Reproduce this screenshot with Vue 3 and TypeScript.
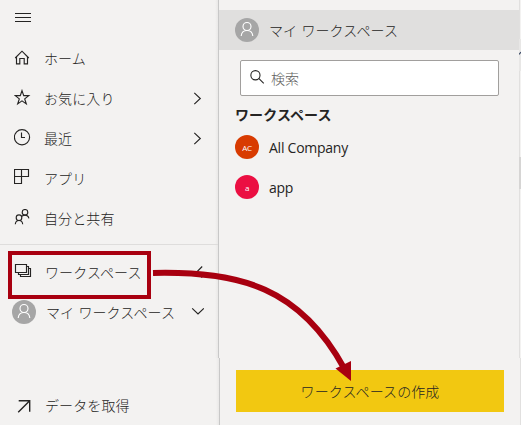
<script setup lang="ts">
interface NavItem {
  icon: string
  label: string
  arrow?: boolean
}

interface Workspace {
  initials: string
  name: string
  tone: string
}

const navItems: NavItem[] = [
  { icon: 'home', label: 'ホーム' },
  { icon: 'star', label: 'お気に入り', arrow: true },
  { icon: 'clock', label: '最近', arrow: true },
  { icon: 'apps', label: 'アプリ' },
  { icon: 'people', label: '自分と共有' },
]

const workspaces: Workspace[] = [
  { initials: 'AC', name: 'All Company', tone: 'orange' },
  { initials: 'a', name: 'app', tone: 'pink' },
]
</script>

<template>
  <div class="screen">
    <nav class="sidebar">
      <div class="menu">
        <svg class="icon" viewBox="0 0 18 18"><path d="M1 4.5h16M1 8.5h16M1 12.5h16" /></svg>
      </div>
      <div v-for="item in navItems" :key="item.icon" class="row">
        <svg v-if="item.icon === 'home'" class="icon" viewBox="0 0 18 18">
          <path d="M1.2 9 8 2.2 14.8 9M2.5 7.8v7h3.3V9.5h4.4v5.3h3.3v-7" />
        </svg>
        <svg v-else-if="item.icon === 'star'" class="icon" viewBox="0 0 18 18">
          <path d="M8 1.6 9.7 6.6h5.1l-4.1 3.3 1.6 5L8 11.9l-4.3 3 1.6-5L1.2 6.6h5.1z" />
        </svg>
        <svg v-else-if="item.icon === 'clock'" class="icon" viewBox="0 0 18 18">
          <circle cx="8" cy="8.2" r="7.6" /><path d="M7.5 3.5v5H11" />
        </svg>
        <svg v-else-if="item.icon === 'apps'" class="icon" viewBox="0 0 18 18">
          <path d="M.5.5h14v7H.5zM.5.5v14h7V.5" />
        </svg>
        <svg v-else class="icon" viewBox="0 0 18 18">
          <circle cx="5" cy="8.7" r="2.8" /><circle cx="11" cy="3.3" r="2.8" />
          <path d="M1.3 15.2c.2-2.4 1.7-3.7 3.7-3.7s3.5 1.3 3.7 3.7M8 7.2c.8-.7 1.8-1.1 3-1.1 2 0 3.4 1.1 3.9 3.2" />
        </svg>
        <span class="label">{{ item.label }}</span>
        <svg v-if="item.arrow" class="chevron" viewBox="0 0 14 14"><path d="m4.3 1.9 6 5.6-6 5.6" /></svg>
      </div>

      <div class="group">
        <div class="row selected">
          <svg class="icon" viewBox="0 0 18 18">
            <path d="M1.5 1.5h11v8h-11zM12.5 3.5h2v8h-10v-2M14.5 5.5h2v8h-10v-2" />
          </svg>
          <span class="label">ワークスペース</span>
          <svg class="chevron" viewBox="0 0 14 14"><path d="M12.2 1.5 6.7 7l5.5 5.5" /></svg>
        </div>
        <div class="row mine">
          <svg class="avatar" viewBox="0 0 24 24">
            <circle class="disc" cx="12" cy="12" r="12" />
            <circle cx="12" cy="8.5" r="4" /><path d="M6.2 18c.3-3.7 2.5-5.5 5.8-5.5s5.5 1.8 5.8 5.5" />
          </svg>
          <span class="label">マイ ワークスペース</span>
          <svg class="chevron" viewBox="0 0 14 14"><path d="M2.2 3.4 8 9l5.8-5.6" /></svg>
        </div>
      </div>

      <div class="row data">
        <svg class="icon" viewBox="0 0 18 18"><path d="M2.7 4.8h11v11M13.7 4.8 2.2 16.2" /></svg>
        <span class="label">データを取得</span>
      </div>
    </nav>

    <main class="panel">
      <div class="current">
        <svg class="avatar" viewBox="0 0 24 24">
          <circle class="disc" cx="12" cy="12" r="12" />
          <circle cx="12" cy="8.5" r="4" /><path d="M6.2 18c.3-3.7 2.5-5.5 5.8-5.5s5.5 1.8 5.8 5.5" />
        </svg>
        <span>マイ ワークスペース</span>
      </div>
      <div class="search">
        <svg class="glass" viewBox="0 0 16 16"><circle cx="5.8" cy="5.6" r="4.9" /><path d="m9.3 9 5.4 5.2" /></svg>
        <span>検索</span>
      </div>
      <h2>ワークスペース</h2>
      <ul>
        <li v-for="space in workspaces" :key="space.name">
          <span class="badge" :class="space.tone">{{ space.initials }}</span>
          <span class="name">{{ space.name }}</span>
        </li>
      </ul>
      <button class="create" type="button">ワークスペースの作成</button>
    </main>

    <aside class="edge">
      <svg class="tab" viewBox="0 0 2 32"><path d="M0 15.5 2 13" /></svg>
      <span class="thumb"></span>
    </aside>

    <svg class="callout" viewBox="0 0 521 425">
      <rect x="10" y="253" width="139" height="44" />
      <path class="curve" d="M153 273C241 271 300 288 344 368" />
      <path class="head" d="M335.5 368.5 351 361l0 20z" />
    </svg>
  </div>
</template>

<style>
body {
  margin: 0;
  overflow: hidden;
}
</style>

<style scoped>
.screen {
  position: relative;
  display: flex;
  width: 521px;
  height: 425px;
  overflow: hidden;
  background: #f3f2f1;
  color: #252423;
  font: 300 14px/20px "Noto Sans CJK JP", sans-serif;
  letter-spacing: 0.1px;
  word-spacing: 1px;
}
.sidebar {
  display: flex;
  flex: none;
  flex-direction: column;
  width: 220px;
  background:
    linear-gradient(90deg, transparent, #e9e8e7 75%, #c8c8c8 75%) 215px 0 / 4px 358px no-repeat,
    linear-gradient(90deg, transparent, #e9e8e7 75%, #c8c8c8 75%) 216px 358px / 4px 67px no-repeat;
}
svg {
  flex: none;
  fill: none;
  stroke: #252423;
  stroke-width: 1.15;
}
.icon {
  width: 18px;
  height: 18px;
}
.menu {
  flex: none;
  height: 29px;
  padding: 9px 0 0 14px;
}
.row {
  display: flex;
  flex: none;
  align-items: center;
  box-sizing: border-box;
  height: 40px;
  padding: 0 16px 0 14px;
}
.label {
  flex: 1;
  padding-left: 12px;
  white-space: nowrap;
}
.chevron {
  width: 14px;
  height: 14px;
}
.group {
  flex: none;
  box-sizing: border-box;
  width: 218px;
  height: 95px;
  margin-top: 6px;
  padding-top: 7px;
  border-top: 1px solid #dedddc;
}
.group .row {
  padding-right: 14px;
}
.selected .label {
  padding-left: 13px;
}
.group .mine {
  padding-left: 12px;
}
.mine .label {
  padding-left: 10px;
}
.avatar {
  width: 24px;
  height: 24px;
  stroke: #fff;
}
.disc {
  fill: #a6a6a6;
  stroke: none;
}
.data {
  margin-top: 46px;
  padding-left: 16px;
}
.data .icon {
  stroke-width: 1.4;
}
.data .label {
  padding-left: 11px;
}
.panel {
  display: flex;
  flex: none;
  flex-direction: column;
  width: 300px;
  margin-left: -1px;
  padding-top: 10px;
  box-sizing: border-box;
}
.current {
  display: flex;
  align-items: center;
  gap: 10px;
  height: 40px;
  padding-left: 16px;
  background: #e0dfde;
}
.search {
  display: flex;
  align-items: center;
  gap: 6px;
  box-sizing: border-box;
  width: 259px;
  height: 36px;
  margin: 10px 0 0 21px;
  padding-left: 9px;
  border: 1px solid #a19f9d;
  border-radius: 2px;
  background: #fff;
  color: #605e5c;
}
.glass {
  width: 15px;
  height: 15px;
  margin-bottom: 2px;
}
h2 {
  margin: 8px 0 3px 16px;
  font-size: 14px;
  font-weight: 700;
  line-height: 20px;
}
ul {
  margin: 0;
  padding: 0 0 0 16px;
  list-style: none;
}
li {
  display: flex;
  align-items: center;
  gap: 10px;
  height: 40px;
}
.badge {
  width: 24px;
  height: 24px;
  border-radius: 50%;
  color: #fff;
  font: 8px/25px "Open Sans", sans-serif;
  letter-spacing: -0.2px;
  text-align: center;
}
.orange {
  background: #d83b01;
}
.pink {
  background: #eb0f42;
}
.name {
  padding-top: 2px;
  font: 14px/20px "Open Sans", sans-serif;
  letter-spacing: -0.25px;
  word-spacing: 0;
}
.create {
  width: 268px;
  height: 42px;
  margin: auto 0 13px 17px;
  padding: 0;
  border: 0;
  background: #f2c811;
  color: #252423;
  font: inherit;
  letter-spacing: 0.1px;
}
.edge {
  width: 2px;
  background:
    linear-gradient(#e1e0df, #e1e0df) 0 0 / 1px 358px no-repeat,
    linear-gradient(#e1e0df, #e1e0df) 1px 358px / 1px 67px no-repeat;
}
.tab,
.thumb {
  display: block;
  width: 2px;
  height: 32px;
  background: #e8e7e6;
}
.tab {
  margin-top: 39px;
  stroke: #3b4a66;
}
.thumb {
  margin-top: 86px;
  background: #d6d5d4;
}
.callout {
  position: absolute;
  inset: 0;
  width: 521px;
  height: 425px;
  stroke: #a80010;
  stroke-width: 4;
  pointer-events: none;
}
.curve {
  stroke-width: 6;
}
.head {
  fill: #a80010;
  stroke: none;
}
</style>
